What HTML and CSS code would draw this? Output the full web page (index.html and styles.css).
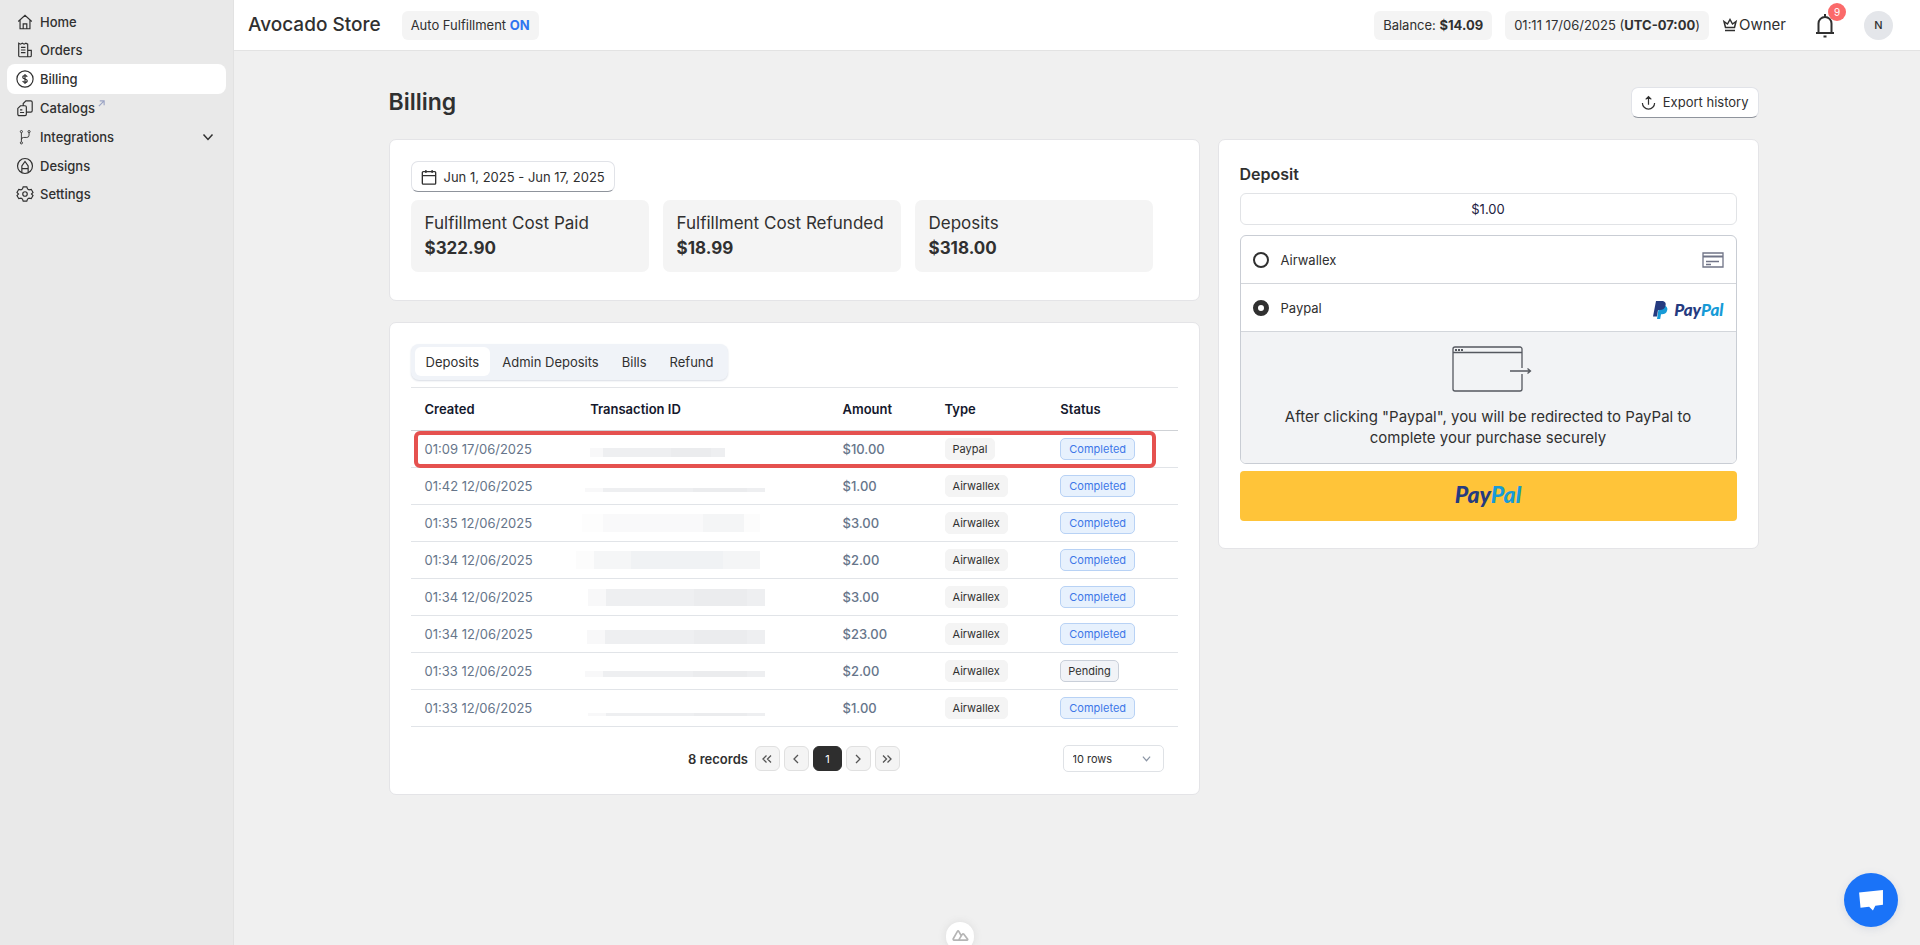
FILE: index.html
```html
<!DOCTYPE html>
<html lang="en">
<head>
<meta charset="utf-8">
<meta name="viewport" content="width=device-width, initial-scale=1">
<title>Billing - Avocado Store</title>
<link rel="stylesheet" href="styles.css">
</head>
<body>
<div class="app">
  <nav class="sidebar" aria-label="Main">
    <a class="nav-item" href="#"><svg class="nav-icon" viewBox="0 0 20 20"><path d="M2.500 9.500 10 2.500l7.500 7M4.500 8v9.500h11V8M8 17.500V12h4v5.500"/></svg>Home</a>
    <a class="nav-item" href="#"><svg class="nav-icon" viewBox="0 0 20 20"><path d="M3 2.500l2 1 2-1 2 1 2-1 2 1V17.500H4a1 1 0 0 1-1-1zM13 10.500h4v5.500a1.500 1.500 0 0 1-1.500 1.500H13M5.500 7h5M5.500 10h5M5.500 13h5"/></svg>Orders</a>
    <a class="nav-item nav-item-active" href="#" aria-current="page"><svg class="nav-icon" viewBox="0 0 20 20"><circle cx="10" cy="10" r="9"/><path d="M12.500 7.500C12 6.500 11 6.200 10 6.200c-1.500 0-2.500.7-2.500 1.900 0 2.600 5 1.200 5 3.800 0 1.200-1 1.900-2.500 1.900-1.200 0-2.200-.5-2.600-1.500M10 4.500v11"/></svg>Billing</a>
    <a class="nav-item" href="#"><svg class="nav-icon" viewBox="0 0 20 20"><path d="M5 7.500h5a1.500 1.500 0 0 1 1.500 1.500v8a1.500 1.500 0 0 1-1.500 1.500H3.500A1.500 1.500 0 0 1 2 17v-6.500zM8 7.500V5l3-3h5.500A1.500 1.500 0 0 1 18 3.500V13a1.500 1.500 0 0 1-1.500 1.500h-5M4.500 12H7M4.500 15h4.500"/></svg>Catalogs<svg class="external-icon" viewBox="0 0 8 8"><path d="M1 7 7 1M2 1h5v5"/></svg></a>
    <a class="nav-item nav-item-group" href="#"><svg class="nav-icon nav-icon-thin" viewBox="0 0 20 20"><circle cx="6" cy="4" r="1.200"/><circle cx="14.500" cy="4" r="1.200"/><circle cx="6" cy="16.500" r="1.200"/><path d="M6 5.300v9.900M14.500 5.300V8a2.500 2.500 0 0 1-2.500 2.500H8.500A2.500 2.500 0 0 0 6 13"/></svg>Integrations<svg class="nav-chevron" viewBox="0 0 12 12"><path d="M1.500 3.500 6 8.500l4.500-5"/></svg></a>
    <a class="nav-item" href="#"><svg class="nav-icon" viewBox="0 0 20 20"><circle cx="10" cy="10" r="8.300"/><path d="M6.500 17V10L10 5l3.500 5v7M6.500 13h7"/></svg>Designs</a>
    <a class="nav-item" href="#"><svg class="nav-icon" viewBox="0 0 20 20"><circle cx="10" cy="10" r="2.500"/><path d="M8 2h4l.8 2.400 1.600.9 2.500-.5 2 3.400L17.200 10l1.700 1.800-2 3.400-2.500-.5-1.600.9L12 18H8l-.8-2.400-1.600-.9-2.500.5-2-3.400L2.800 10 1.100 8.200l2-3.400 2.500.5 1.600-.9z"/></svg>Settings</a>
  </nav>

  <div class="workspace">
    <header class="topbar">
      <span class="store-name">Avocado Store</span>
      <span class="pill">Auto Fulfillment <b class="pill-on">ON</b></span>
      <div class="topbar-right">
        <span class="pill">Balance: <b>$14.09</b></span>
        <span class="pill">01:11 17/06/2025 (<b>UTC-07:00</b>)</span>
        <span class="role"><svg class="crown" viewBox="0 0 16 16"><path d="M2 4.500 3.500 10.500h9L14 4.500 10.500 7 8 2.500 5.500 7zM3 13.500h10"/></svg>Owner</span>
        <button class="bell" type="button" aria-label="Notifications"><svg class="bell-icon" viewBox="0 0 20 26"><path d="M1 21h18M3.500 21v-9.500a6.500 6.500 0 0 1 13 0V21M10 4.500V2M8.500 24.500h3"/></svg><span class="bell-badge">9</span></button>
        <button class="avatar" type="button" aria-label="Account">N</button>
      </div>
    </header>

    <main class="page">
      <div class="page-head">
        <h1 class="page-title">Billing</h1>
        <button class="button" type="button"><svg class="export-icon" viewBox="0 0 16 16"><path d="M8 10.500V2M5 4.700 8 1.700l3 3M1.500 8.500a6.500 6.500 0 0 0 13 0"/></svg>Export history</button>
      </div>

      <div class="columns">
        <div class="column">
          <section class="card summary">
            <button class="button date-button" type="button"><svg class="calendar-icon" viewBox="0 0 18 18"><path d="M2.500 3h13a1 1 0 0 1 1 1v12a1 1 0 0 1-1 1h-13a1 1 0 0 1-1-1V4a1 1 0 0 1 1-1zM1.500 7.500h15M5.500 1v3.500M12.500 1v3.500"/></svg>Jun 1, 2025 - Jun 17, 2025</button>
            <div class="stats">
              <div class="stat"><span class="stat-label">Fulfillment Cost Paid</span><b class="stat-value">$322.90</b></div>
              <div class="stat"><span class="stat-label">Fulfillment Cost Refunded</span><b class="stat-value">$18.99</b></div>
              <div class="stat"><span class="stat-label">Deposits</span><b class="stat-value">$318.00</b></div>
            </div>
          </section>

          <section class="card history">
            <div class="tabs" role="tablist">
              <button class="tab tab-active" type="button" role="tab" aria-selected="true">Deposits</button>
              <button class="tab" type="button" role="tab">Admin Deposits</button>
              <button class="tab" type="button" role="tab">Bills</button>
              <button class="tab" type="button" role="tab">Refund</button>
            </div>
            <table class="table">
              <colgroup><col class="col-created"><col class="col-id"><col class="col-amount"><col class="col-type"><col class="col-status"></colgroup>
              <thead><tr><th>Created</th><th>Transaction ID</th><th>Amount</th><th>Type</th><th>Status</th></tr></thead>
              <tbody>
                <tr class="row-marked"><td>01:09 17/06/2025<span class="marker"></span></td><td><span class="masked masked-a"></span></td><td class="amount">$10.00</td><td><span class="tag">Paypal</span></td><td><span class="tag tag-done">Completed</span></td></tr>
                <tr><td>01:42 12/06/2025</td><td><span class="masked masked-b"></span></td><td class="amount">$1.00</td><td><span class="tag">Airwallex</span></td><td><span class="tag tag-done">Completed</span></td></tr>
                <tr><td>01:35 12/06/2025</td><td><span class="masked masked-c"></span></td><td class="amount">$3.00</td><td><span class="tag">Airwallex</span></td><td><span class="tag tag-done">Completed</span></td></tr>
                <tr><td>01:34 12/06/2025</td><td><span class="masked masked-d"></span></td><td class="amount">$2.00</td><td><span class="tag">Airwallex</span></td><td><span class="tag tag-done">Completed</span></td></tr>
                <tr><td>01:34 12/06/2025</td><td><span class="masked masked-e"></span></td><td class="amount">$3.00</td><td><span class="tag">Airwallex</span></td><td><span class="tag tag-done">Completed</span></td></tr>
                <tr><td>01:34 12/06/2025</td><td><span class="masked masked-f"></span></td><td class="amount">$23.00</td><td><span class="tag">Airwallex</span></td><td><span class="tag tag-done">Completed</span></td></tr>
                <tr><td>01:33 12/06/2025</td><td><span class="masked masked-g"></span></td><td class="amount">$2.00</td><td><span class="tag">Airwallex</span></td><td><span class="tag tag-pending">Pending</span></td></tr>
                <tr><td>01:33 12/06/2025</td><td><span class="masked masked-h"></span></td><td class="amount">$1.00</td><td><span class="tag">Airwallex</span></td><td><span class="tag tag-done">Completed</span></td></tr>
              </tbody>
            </table>
            <div class="pager">
              <div class="pager-pages">
                <span class="records">8 records</span>
                <button class="page-button" type="button" aria-label="First page"><svg class="page-icon" viewBox="0 0 12 12"><path d="M5.500 2.500 2 6l3.500 3.500M10 2.500 6.500 6 10 9.500"/></svg></button>
                <button class="page-button" type="button" aria-label="Previous page"><svg class="page-icon" viewBox="0 0 12 12"><path d="M8 2 4 6l4 4"/></svg></button>
                <button class="page-button page-current" type="button" aria-current="page">1</button>
                <button class="page-button" type="button" aria-label="Next page"><svg class="page-icon" viewBox="0 0 12 12"><path d="m4 2 4 4-4 4"/></svg></button>
                <button class="page-button" type="button" aria-label="Last page"><svg class="page-icon" viewBox="0 0 12 12"><path d="M2 2.500 5.500 6 2 9.500M6.500 2.500 10 6 6.500 9.500"/></svg></button>
              </div>
              <div class="rows">
                <select class="rows-select" aria-label="Rows per page"><option>10 rows</option><option>20 rows</option><option>50 rows</option></select>
                <svg class="rows-chevron" viewBox="0 0 10 10"><path d="M1 3l4 4.500L9 3"/></svg>
              </div>
            </div>
          </section>
        </div>

        <section class="card deposit">
          <h2 class="deposit-title"><label for="amount">Deposit</label></h2>
          <input class="amount-input" id="amount" type="text" value="$1.00">
          <div class="methods">
            <div class="method">
              <input class="radio" type="radio" name="method" id="airwallex"><label class="method-label" for="airwallex">Airwallex</label>
              <svg class="card-icon" viewBox="0 0 22 16"><path class="card-face" d="M1 1h20v14H1z"/><path class="card-band" d="M1 4.500h20"/><path class="card-line" d="M4 9.500h13M4 12.500h5"/></svg>
            </div>
            <div class="method">
              <input class="radio" type="radio" name="method" id="paypal" checked><label class="method-label" for="paypal">Paypal</label>
              <span class="paypal-logo"><svg class="paypal-mark" viewBox="0 0 15 18"><path class="mark-sky" d="M6 5h6.500c2 1 2.300 3 1.500 5-.8 2.200-2.500 3.200-5 3.200H8l-.8 4.800H4z"/><path class="mark-navy" d="M3 0h5.500c3.300 0 4.700 1.700 4.100 4.500C12 7.700 9.800 9 6.900 9H5l-1 6.500H0z"/></svg><span class="wordmark">Pay<span class="wordmark-sky">Pal</span></span></span>
            </div>
            <div class="redirect">
              <svg class="redirect-icon" viewBox="-7 0 87 46"><path d="M70 22V3a2 2 0 0 0-2-2H3a2 2 0 0 0-2 2v40a2 2 0 0 0 2 2h65a2 2 0 0 0 2-2V28M1 6.500h69"/><path d="M58 25h20M75.500 22.500 78.500 25l-3 2.500"/><path class="redirect-dots" d="M3 4h9"/></svg>
              <p class="redirect-text">After clicking "Paypal", you will be redirected to PayPal to complete your purchase securely</p>
            </div>
          </div>
          <button class="paypal-button" type="button" aria-label="Pay with PayPal"><span class="wordmark wordmark-large">Pay<span class="wordmark-sky">Pal</span></span></button>
        </section>
      </div>
    </main>
  </div>
</div>
<button class="devtools" type="button" aria-label="Developer tools"><svg class="devtools-icon" viewBox="0 0 18 14"><path d="M10 12H2a1 1 0 0 1-.8-1.500l4.500-8a.8.8 0 0 1 1.400 0L10 7.500M7 12l4-6.500a.8.8 0 0 1 1.400 0l4.300 5.500a.7.7 0 0 1-.6 1H7"/></svg></button>
<button class="chat" type="button" aria-label="Chat"><svg class="chat-icon" viewBox="0 0 26 22"><path d="M0 2.500 25 0v15.500l-8 1L14.500 21.500 10.500 17.500 1.500 18.500z"/></svg></button>
</body>
</html>
```
FILE: styles.css
```css
* { box-sizing: border-box; }
body { margin: 0; background: #f0f0f0; color: #303030; font: 13px/20px Inter, "Open Sans", sans-serif; }
button, input, select { font: inherit; color: inherit; }
button { cursor: pointer; }
svg { fill: none; stroke: currentColor; stroke-width: 1.3; flex: none; }

.app { display: flex; min-height: 100vh; }

.sidebar { width: 234px; flex: none; padding: 8px 7px; background: #e9e9e9; border-right: 1px solid #e2e2e2; }
.nav-item { display: flex; align-items: center; height: 28px; padding: 0 9px; gap: 6px; border-radius: 8px; color: inherit; text-decoration: none; font-weight: 450; }
.nav-item-active, .nav-item-group { height: 30px; }
.nav-item-active { background: #fff; }
.nav-icon { width: 18px; height: 18px; }
.nav-icon-thin { stroke-width: 1; }
.external-icon { width: 7px; height: 7px; align-self: flex-start; margin: 6px 0 0 -3px; color: #9aa3c4; }
.nav-chevron { width: 12px; height: 12px; margin: 0 3px 0 auto; stroke-width: 1.5; }

.workspace { flex: 1; min-width: 0; }
.topbar { display: flex; align-items: center; height: 51px; padding: 0 27px 0 14px; background: #fff; border-bottom: 1px solid #e3e3e3; }
.store-name { margin-right: 21px; font-size: 19px; font-weight: 500; }
.pill { padding: 4px 9px 5px; border-radius: 6px; background: #f4f4f4; white-space: nowrap; }
.pill-on { color: #2f75f0; }
.topbar-right { display: flex; align-items: center; margin-left: auto; gap: 13px; }
.role { display: flex; align-items: center; gap: 1px; font-size: 15px; }
.crown { width: 16px; height: 16px; stroke-width: 1.5; }
.bell { position: relative; margin: 0 16px; padding: 0; border: 0; background: none; display: flex; }
.bell-icon { width: 20px; height: 26px; stroke-width: 2; }
.bell-badge { position: absolute; top: -9px; left: 13px; width: 18px; height: 18px; border-radius: 50%; background: #fb6a6a; color: #fff; font-size: 10px; line-height: 18px; text-align: center; }
.avatar { width: 29px; height: 29px; padding: 0; border: 0; border-radius: 50%; background: #e4e6ea; font-size: 11px; font-weight: 500; }

.page { max-width: 1377px; margin: 0 auto; padding: 36px 7px 40px 0; }
.page-head { display: flex; justify-content: space-between; align-items: center; height: 30px; margin-bottom: 22px; }
.page-title { margin: 0; font-size: 23px; line-height: 28px; font-weight: 600; }
.button { display: flex; align-items: center; gap: 7px; height: 31px; padding: 0 9px; border: 1px solid #e1e3e8; border-bottom-color: #8f949c; border-radius: 7px; background: #fff; white-space: nowrap; }
.export-icon { width: 15px; height: 15px; }

.columns { display: grid; grid-template-columns: 811fr 541fr; gap: 18px; align-items: start; }
.column { display: grid; gap: 21px; min-width: 0; }
.card { min-width: 0; border: 1px solid #e4e4e7; border-radius: 7px; background: #fff; padding: 21px; }
.summary { padding-bottom: 28px; }
.calendar-icon { width: 16px; height: 16px; stroke-width: 1.5; }
.stats { display: flex; gap: 14px; margin-top: 8px; }
.stat { display: flex; flex-direction: column; flex: 0 1 238px; height: 72px; padding: 11px 14px; border-radius: 7px; background: #f4f4f4; }
.stat-label { font-size: 17px; line-height: 24px; white-space: nowrap; }
.stat-value { font-size: 17px; line-height: 26px; font-weight: 700; }

.history { padding-bottom: 22px; }
.tabs { display: inline-flex; gap: 1px; padding: 3px 4px 4px; border-radius: 8px; background: #f0f3f8; box-shadow: 0 1px 2px #d8dce4; vertical-align: top; }
.tab { height: 29px; padding: 0 11px; border: 0; border-radius: 6px; background: none; }
.tab-active { background: #fff; }
.table { width: 100%; margin-top: 7px; table-layout: fixed; border-collapse: collapse; border-top: 1px solid #e3e5e8; }
.col-created { width: 21.6%; }
.col-id { width: 32.9%; }
.col-amount { width: 13.3%; }
.col-type { width: 15.1%; }
.col-status { width: 17.1%; }
.table th { height: 43px; padding: 0 14px; border-bottom: 1px solid #cfd2d6; color: #14182c; font-weight: 600; text-align: left; }
.table td { height: 37px; padding: 0 14px; border-bottom: 1px solid #e1e4e8; color: #66758a; white-space: nowrap; }
.table .amount { font-weight: 450; }
.row-marked { position: relative; }
.marker { position: absolute; top: 0; left: 3px; right: 22px; height: 37px; border: 4px solid #e5514f; border-radius: 6px; }
.tag { display: block; width: fit-content; height: 22px; padding: 0 7px; border: 1px solid #f4f4f4; border-radius: 5px; background: #f4f4f4; color: #303030; font-size: 11px; line-height: 20px; }
.tag-done { padding: 0 8px; border-color: #b8d2f5; background: #e7f1fd; color: #3d77e8; }
.tag-pending { border-color: #c9cfd9; background: #f1f3f7; }

.masked { display: block; background: linear-gradient(90deg, #f8f8f9 0 10%, #eeeff1 10% 60%, #ebecee 60% 90%, #eeeff1 90%); }
.masked-a { width: 135px; height: 9px; margin-top: 6px; }
.masked-b { width: 180px; height: 4px; margin: 8px 0 0 -5px; }
.masked-c { width: 178px; height: 18px; margin-left: -8px; background: linear-gradient(90deg, #fdfdfd 0 12%, #f9f9fa 12% 68%, #f4f5f6 68% 91%, #fcfcfc 91%); }
.masked-d { width: 184px; height: 18px; margin-left: -14px; background: linear-gradient(90deg, #fcfcfc 0 10%, #f5f6f7 10% 30%, #f0f2f4 30% 80%, #f4f5f6 80%); }
.masked-e { width: 177px; height: 17px; margin-left: -2px; }
.masked-f { width: 178px; height: 14px; margin: 6px 0 0 -3px; }
.masked-g { width: 180px; height: 6px; margin: 6px 0 0 -5px; }
.masked-h { width: 177px; height: 3px; margin: 12px 0 0 -2px; }

.pager { display: grid; grid-template-columns: 1fr auto 1fr; align-items: center; margin-top: 18px; }
.pager-pages { grid-column: 2; display: flex; align-items: center; gap: 4px; }
.records { margin-right: 3px; font-weight: 600; }
.page-button { display: grid; place-items: center; width: 25px; height: 25px; padding: 0; border: 1px solid #e0e0e0; border-radius: 6px; background: #f4f4f4; color: #555; }
.page-current { width: 29px; border-color: #2e2e2e; background: #2e2e2e; color: #fff; font-size: 11px; }
.page-icon { width: 12px; height: 12px; }
.rows { display: grid; justify-self: end; width: 101px; margin-right: 14px; }
.rows-select { grid-area: 1 / 1; appearance: none; height: 27px; padding: 0 9px; border: 1px solid #dfe2e6; border-radius: 5px; background: #fff; font-size: 11px; }
.rows-chevron { grid-area: 1 / 1; place-self: center end; width: 9px; height: 9px; margin-right: 13px; color: #8b95a5; pointer-events: none; }

.deposit { padding: 24px 21px 27px; }
.deposit-title { margin: 0 0 9px; font-size: 16px; line-height: 20px; font-weight: 600; }
.amount-input { display: block; width: 100%; height: 32px; padding: 0; border: 1px solid #e1e3e6; border-radius: 6px; text-align: center; color: #1c2140; }
.methods { margin: 10px 0 7px; border: 1px solid #c9cdd4; border-radius: 6px; overflow: hidden; }
.method { display: flex; align-items: center; height: 48px; padding: 0 12px; border-bottom: 1px solid #d3d6db; }
.radio { appearance: none; width: 16px; height: 16px; margin: 0; border: 2px solid #303030; border-radius: 50%; background: #fff; }
.radio:checked { border-width: 5px; }
.method-label { flex: 1; padding-left: 12px; }
.card-icon { width: 22px; height: 16px; color: #707487; }
.card-band { stroke-width: 2; }
.paypal-logo { display: flex; align-items: center; gap: 6px; padding-top: 4px; }
.paypal-mark { width: 15px; height: 18px; stroke: none; }
.mark-navy { fill: #253b80; }
.mark-sky { fill: #179bd7; }
.wordmark { color: #253b80; font: italic 900 17px/20px Lato, sans-serif; }
.wordmark-sky { color: #179bd7; }
.wordmark-large { font-size: 23px; }
.redirect { display: flex; flex-direction: column; align-items: center; padding: 14px 24px 15px; background: #f2f3f5; text-align: center; }
.redirect-icon { width: 87px; height: 46px; color: #55585f; }
.redirect-dots { stroke-width: 2; stroke-dasharray: 2 1; }
.redirect-text { max-width: 430px; margin: 14px 0 0; font-size: 15px; line-height: 21px; }
.paypal-button { display: grid; place-items: center; width: 100%; height: 50px; padding: 0 0 4px; border: 0; border-radius: 4px; background: #ffc439; }

.devtools { position: fixed; left: 50%; bottom: -6px; width: 28px; height: 29px; margin-left: -14px; padding: 0 0 2px; display: grid; place-items: center; border: 0; border-radius: 14px; background: #fff; box-shadow: 0 0 8px #dcdcdc; color: #b5b5b5; }
.devtools-icon { width: 17px; height: 13px; stroke-width: 1.8; }
.chat { position: fixed; right: 22px; bottom: 18px; width: 54px; height: 54px; padding: 0; display: grid; place-items: center; border: 0; border-radius: 50%; background: #1a73f8; box-shadow: 0 2px 8px #d8dbe2; color: #fff; }
.chat-icon { width: 25px; height: 21px; fill: currentColor; stroke: none; }
```
